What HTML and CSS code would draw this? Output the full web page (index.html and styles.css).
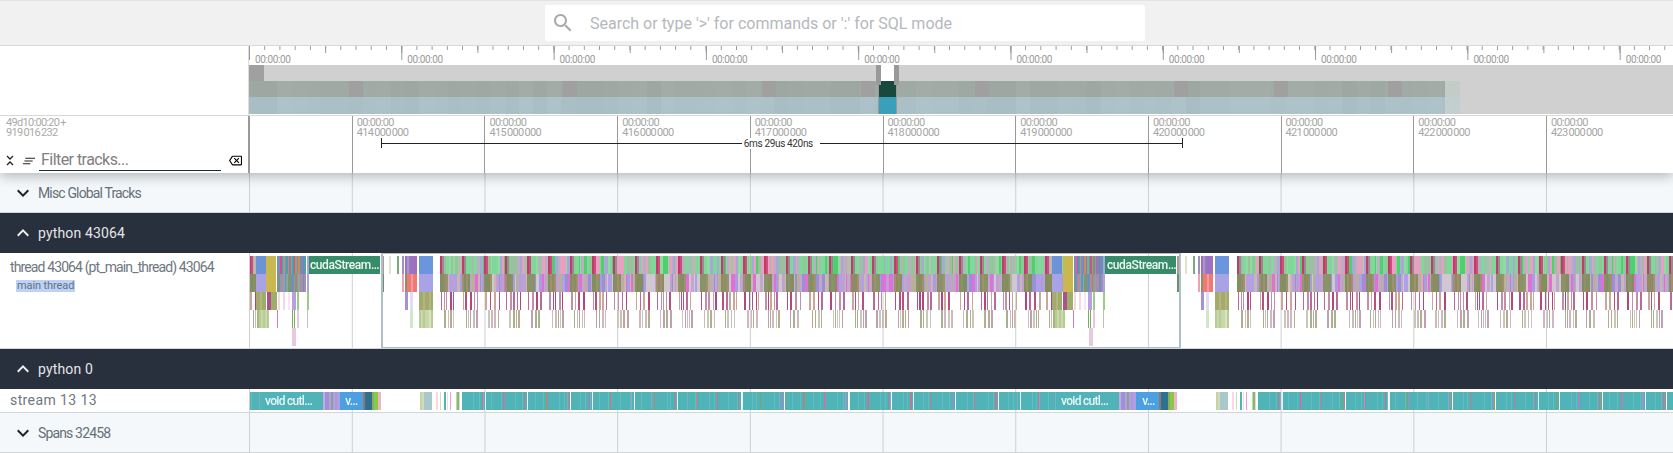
FILE: index.html
```html
<!DOCTYPE html>
<html>
<head>
    <title>Trace viewer</title>
    <link rel="stylesheet" href="styles.css">
</head>
<body>
    <!-- Search bar -->
    <div class="topbar">
        <div class="search">
            <svg class="search-icon" viewBox="0 0 24 24"><path d="M15.5 14h-.79l-.28-.27C15.41 12.59 16 11.11 16 9.5 16 5.91 13.09 3 9.5 3S3 5.91 3 9.5 5.91 16 9.5 16c1.61 0 3.09-.59 4.23-1.57l.27.28v.79l5 4.99L20.49 19l-4.99-5zm-6 0C7.01 14 5 11.99 5 9.5S7.01 5 9.5 5 14 7.01 14 9.5 11.99 14 9.5 14z"/></svg>
            <span class="search-text">Search or type '&gt;' for commands or ':' for SQL mode</span>
        </div>
    </div>

    <!-- Overview minimap -->
    <div class="overview">
        <div class="overview-side"></div>
        <div class="overview-main">
            <div class="ruler">
                <span class="ruler-label">00:00:00</span>
                <span class="ruler-label">00:00:00</span>
                <span class="ruler-label">00:00:00</span>
                <span class="ruler-label">00:00:00</span>
                <span class="ruler-label">00:00:00</span>
                <span class="ruler-label">00:00:00</span>
                <span class="ruler-label">00:00:00</span>
                <span class="ruler-label">00:00:00</span>
                <span class="ruler-label">00:00:00</span>
                <span class="ruler-label">00:00:00</span>
            </div>
            <canvas id="overviewCanvas" width="1424" height="49"></canvas>
        </div>
    </div>

    <!-- Time axis and filter box -->
    <div class="time-header">
        <div class="header-side">
            <div class="time-offset">49d10:00:20 +<br>919 016 232</div>
            <div class="filter-row">
                <svg class="collapse-icon" viewBox="0 0 8 11"><path d="M1 1l3 3 3-3M1 10l3-3 3 3" fill="none" stroke="#222" stroke-width="1.3"/></svg>
                <svg class="lines-icon" viewBox="0 0 13 8"><path d="M2.500 1H13M1.500 4H10.500M0 7H8" fill="none" stroke="#222" stroke-width="1.2"/></svg>
                <div class="filter-input">Filter tracks...</div>
                <svg class="clear-icon" viewBox="0 0 24 24"><path d="M22 3H7c-.69 0-1.23.35-1.59.88L0 12l5.41 8.11c.36.53.9.89 1.59.89h15c1.1 0 2-.9 2-2V5c0-1.1-.9-2-2-2zm0 16H7.07L2.4 12l4.66-7H22v14zm-11.59-2L14 13.41 17.59 17 19 15.59 15.41 12 19 8.41 17.59 7 14 10.59 10.41 7 9 8.41 12.59 12 9 15.59z"/></svg>
            </div>
        </div>
        <div class="header-main">
            <div class="time-col">00:00:00<br>414 000 000</div>
            <div class="time-col">00:00:00<br>415 000 000</div>
            <div class="time-col">00:00:00<br>416 000 000</div>
            <div class="time-col">00:00:00<br>417 000 000</div>
            <div class="time-col">00:00:00<br>418 000 000</div>
            <div class="time-col">00:00:00<br>419 000 000</div>
            <div class="time-col">00:00:00<br>420 000 000</div>
            <div class="time-col">00:00:00<br>421 000 000</div>
            <div class="time-col">00:00:00<br>422 000 000</div>
            <div class="time-col">00:00:00<br>423 000 000</div>
            <div class="measure">
                <div class="measure-line"></div>
                <span class="measure-label">6ms 29us 420ns</span>
            </div>
        </div>
    </div>

    <!-- Tracks -->
    <div class="track-row group-row">
        <div class="track-label">
            <svg class="chevron" viewBox="0 0 24 24"><path d="M16.59 8.59L12 13.17 7.41 8.59 6 10l6 6 6-6z"/></svg>
            <span>Misc Global Tracks</span>
        </div>
        <div class="track-body"></div>
    </div>

    <div class="process-row">
        <svg class="chevron" viewBox="0 0 24 24"><path d="M12 8l-6 6 1.41 1.41L12 10.83l4.59 4.58L18 14z"/></svg>
        <span>python 43064</span>
    </div>

    <div class="track-row thread-row">
        <div class="thread-label">
            <div>thread 43064 (pt_main_thread) 43064</div>
            <span class="chip">main thread</span>
        </div>
        <div class="track-body">
            <canvas id="threadCanvas" width="1423" height="95"></canvas>
            <div class="selection"></div>
            <span class="slice-text cuda-first">cudaStream…</span>
            <span class="slice-text cuda-second">cudaStream…</span>
        </div>
    </div>

    <div class="process-row">
        <svg class="chevron" viewBox="0 0 24 24"><path d="M12 8l-6 6 1.41 1.41L12 10.83l4.59 4.58L18 14z"/></svg>
        <span>python 0</span>
    </div>

    <div class="track-row stream-row">
        <div class="stream-label">stream 13 13</div>
        <div class="track-body">
            <canvas id="streamCanvas" width="1423" height="23"></canvas>
            <span class="slice-text stream-text void-first">void cutl…</span>
            <span class="slice-text stream-text v-first">v…</span>
            <span class="slice-text stream-text void-second">void cutl…</span>
            <span class="slice-text stream-text v-second">v…</span>
        </div>
    </div>

    <div class="track-row group-row">
        <div class="track-label">
            <svg class="chevron" viewBox="0 0 24 24"><path d="M16.59 8.59L12 13.17 7.41 8.59 6 10l6 6 6-6z"/></svg>
            <span>Spans 32458</span>
        </div>
        <div class="track-body"></div>
    </div>

    <script src="script.js"></script>
</body>
</html>
```

FILE: styles.css
```css
/* Reset some default styles */
body {
    font-family: Roboto, "Liberation Sans", sans-serif;
    margin: 0;
    padding: 0;
    height: 453px;
    overflow: hidden;
    background-color: #fff;
}

canvas {
    display: block;
}

/* Search bar */
.topbar {
    height: 46px;
    box-sizing: border-box;
    padding: 4px 0 0 545px;
    background-color: #f1f1f1;
    border-top: 1px solid #e4e4e4;
    border-bottom: 1px solid #d9d9d9;
    position: relative;
    z-index: 4;
}

.search {
    width: 600px;
    height: 36px;
    display: flex;
    align-items: center;
    background-color: #fff;
    border-radius: 2px;
}

.search-icon {
    width: 24px;
    height: 24px;
    margin-left: 6px;
    fill: #a9a9a9;
}

.search-text {
    margin-left: 15px;
    font-size: 16px;
    color: #b5b8bc;
}

/* Overview minimap */
.overview {
    display: flex;
    height: 69px;
    background-color: #fff;
    border-bottom: 1px solid #d8d8d8;
    position: relative;
    z-index: 3;
}

.overview-side {
    width: 249px;
    flex: none;
    box-sizing: border-box;
    border-right: 1px solid #dcdcdc;
}

.overview-main {
    flex: 1;
    min-width: 0;
}

.ruler {
    display: flex;
    height: 19px;
    box-sizing: border-box;
    background-image:
        linear-gradient(to right, #999 1px, transparent 1px),
        linear-gradient(to right, #999 1px, transparent 1px),
        linear-gradient(to right, #999 1px, transparent 1px);
    background-size: 152.3px 14px, 76.15px 7px, 15.23px 4px;
    background-repeat: repeat-x;
}

.ruler-label {
    flex: 0 0 152.3px;
    box-sizing: border-box;
    padding: 8px 0 0 6px;
    font-size: 10px;
    line-height: 11px;
    letter-spacing: -0.4px;
    color: #999;
}

.ruler-label:last-child {
    flex: 1 1 0;
}

/* Time axis */
.time-header {
    display: flex;
    height: 57px;
    background-color: #fff;
    box-shadow: 0 3px 12px rgba(0, 0, 0, 0.28);
    position: relative;
    z-index: 2;
}

.header-side {
    flex: none;
    box-sizing: border-box;
    border-right: 2px solid #9a9a9a;
    width: 250px;
    padding: 2px 0 0 6px;
}

.time-offset {
    font-size: 11px;
    line-height: 10px;
    letter-spacing: -0.7px;
    word-spacing: -1px;
    color: #aaa;
    height: 32px;
}

.filter-row {
    display: flex;
    align-items: center;
}

.collapse-icon {
    width: 8px;
    height: 11px;
    flex: none;
}

.lines-icon {
    width: 12px;
    height: 8px;
    margin-left: 9px;
    flex: none;
}

.filter-input {
    width: 182px;
    height: 21px;
    margin-left: 4px;
    padding-left: 2px;
    box-sizing: border-box;
    border-bottom: 1px solid #1e2833;
    font-size: 16px;
    line-height: 19px;
    letter-spacing: -0.55px;
    color: #808080;
}

.clear-icon {
    width: 13px;
    height: 13px;
    margin-left: 8px;
    flex: none;
}

.header-main {
    flex: 1;
    min-width: 0;
    display: flex;
    padding-left: 101.8px;
    position: relative;
}

.time-col {
    flex: 0 0 132.7px;
    box-sizing: border-box;
    border-left: 1px solid #999;
    padding: 2px 0 0 4px;
    font-size: 11px;
    line-height: 10px;
    letter-spacing: -0.7px;
    word-spacing: -1px;
    color: #a6a6a6;
}

.time-col:nth-last-child(2) {
    flex: 1 1 0;
}

/* Measured span between the two markers */
.measure {
    position: absolute;
    left: 130.8px;
    top: 22px;
    width: 800px;
    height: 10px;
    border-left: 1px solid #222;
    border-right: 1px solid #222;
}

.measure-line {
    margin-top: 5px;
    border-top: 1px solid #222;
}

.measure-label {
    position: absolute;
    left: 360px;
    top: 0;
    width: 78px;
    padding-left: 2px;
    box-sizing: border-box;
    background-color: #fff;
    font-size: 10px;
    line-height: 11px;
    letter-spacing: -0.35px;
    color: #333;
}

/* Tracks */
.track-row {
    display: flex;
    box-sizing: border-box;
    border-bottom: 1px solid #d3d6d8;
}

.group-row {
    height: 40px;
    background-color: #f4f8fb;
}

.track-label {
    width: 249px;
    flex: none;
    display: flex;
    align-items: center;
    padding-left: 11px;
    box-sizing: border-box;
    font-size: 14px;
    letter-spacing: -0.85px;
    color: #676f78;
}

.track-label span {
    margin-left: 3px;
}

.track-body {
    flex: 1;
    min-width: 0;
    position: relative;
    border-left: 1px solid #ccd0d3;
    background-image: linear-gradient(to right, #ccd0d3 1px, transparent 1px);
    background-size: 132.7px 100%;
    background-position: 101.8px 0;
}

.chevron {
    width: 24px;
    height: 24px;
    flex: none;
    fill: #222;
}

.process-row {
    height: 40px;
    display: flex;
    align-items: center;
    padding-left: 11px;
    background-color: #282f3d;
    font-size: 14px;
    letter-spacing: 0.15px;
    color: #e4e6e8;
}

.process-row .chevron {
    fill: #eee;
    margin-right: 3px;
}

.thread-row {
    height: 96px;
}

.thread-label {
    width: 249px;
    flex: none;
    box-sizing: border-box;
    padding: 6px 0 0 10px;
    font-size: 14px;
    line-height: 17px;
    letter-spacing: -0.88px;
    color: #6f7780;
}

.chip {
    display: inline-block;
    margin: 1px 0 0 6px;
    padding: 0 1px;
    font-size: 11px;
    line-height: 12px;
    letter-spacing: -0.1px;
    background-color: #bcd3f7;
    color: #66707c;
}

.selection {
    position: absolute;
    left: 131px;
    top: 0;
    width: 800px;
    height: 95px;
    box-sizing: border-box;
    border: 1px solid #aebfc6;
    border-left-width: 2px;
    border-right-width: 2px;
}

.stream-row {
    height: 24px;
}

.stream-label {
    width: 249px;
    flex: none;
    box-sizing: border-box;
    padding: 3px 0 0 10px;
    font-size: 14px;
    line-height: 17px;
    letter-spacing: 0.4px;
    color: #6f7780;
}

/* Text on the slices */
.slice-text {
    position: absolute;
    top: 3px;
    height: 18px;
    line-height: 18px;
    font-size: 12px;
    font-weight: 500;
    letter-spacing: -0.4px;
    text-align: center;
    color: #eef7f4;
}

.cuda-first {
    left: 59px;
    width: 71px;
}

.cuda-second {
    left: 856px;
    width: 71px;
}

.stream-text {
    letter-spacing: -0.7px;
    color: #e8f6f6;
}

.void-first {
    left: 4px;
    width: 69px;
}

.v-first {
    left: 90px;
    width: 23px;
}

.void-second {
    left: 800px;
    width: 69px;
}

.v-second {
    left: 887px;
    width: 23px;
}
```

FILE: script.js
```js
// Small seeded random so the picture is the same on every load
function makeRandom(seed) {
    return function () {
        seed = (seed + 0x6d2b79f5) | 0;
        let t = Math.imul(seed ^ (seed >>> 15), 1 | seed);
        t = (t + Math.imul(t ^ (t >>> 7), 61 | t)) ^ t;
        return ((t ^ (t >>> 14)) >>> 0) / 4294967296;
    };
}

function pick(rand, list) {
    return list[Math.floor(rand() * list.length)];
}

const CYCLE = 796.5;
const FIRST_CUDA = 58.6; // relative to the track body

// ---- overview ----
function drawOverview() {
    const ctx = document.getElementById("overviewCanvas").getContext("2d");
    const rand = makeRandom(7);
    const darkCells = [349, 563, 762, 861, 975, 1174, 1274, 1388];
    ctx.fillStyle = "#d0d0d0";
    ctx.fillRect(0, 0, 1424, 49);
    ctx.fillStyle = "#a0a0a0";
    ctx.fillRect(0, 0, 15, 16);

    for (let x = 0; x < 1196; x += 14.2) {
        const j = Math.floor(rand() * 6) - 3;
        ctx.fillStyle = `rgb(${161 + j}, ${171 + j}, ${166 + j})`;
        ctx.fillRect(Math.round(x), 16, 15, 16);
        ctx.fillStyle = `rgb(${172 + j}, ${192 + j}, ${199 + j})`;
        ctx.fillRect(Math.round(x), 32, 15, 17);
    }
    darkCells.forEach((left) => {
        ctx.fillStyle = "#a0a0a0";
        ctx.fillRect(left - 249, 16, 14, 16);
    });
    ctx.fillStyle = "#c4ccc8";
    ctx.fillRect(1196, 16, 15, 16);
    ctx.fillStyle = "#c2cfcf";
    ctx.fillRect(1196, 32, 15, 17);

    // selected window
    ctx.fillStyle = "#fff";
    ctx.fillRect(632, 0, 13, 16);
    ctx.fillStyle = "#174a3c";
    ctx.fillRect(630, 16, 17, 16);
    ctx.fillStyle = "#3a9fbb";
    ctx.fillRect(630, 32, 17, 17);
    ctx.fillStyle = "#999";
    ctx.fillRect(627, 0, 5, 20);
    ctx.fillRect(645, 0, 5, 20);
    ctx.fillRect(629, 20, 1, 29);
    ctx.fillRect(647, 20, 1, 29);
}

// ---- thread flame chart ----
function drawThread() {
    const ctx = document.getElementById("threadCanvas").getContext("2d");

    function bar(x, row, w, color) {
        ctx.fillStyle = color;
        ctx.fillRect(Math.round(x), 3 + row * 18, Math.max(1, Math.round(w)), 18);
    }

    function stripes(x, row, w, colors, rand) {
        for (let i = 0; i < w; i += 2) {
            bar(x + i, row, 2, pick(rand, colors));
        }
    }

    const row0 = ["#7fd89a", "#86d6a0", "#8fdca0", "#4fd070", "#a8a8d8", "#b8b0c0", "#e8a0c0", "#90c898", "#9ac0a0", "#7fd89a"];
    const olive = ["#8a9268", "#7f8f5e", "#a09070", "#8f8a60"];
    const row1 = ["#a99de0", "#bfa0d0", "#c9b8b0", "#e070d8", "#b0a0e8", "#d0c8d0", "#9a90d8", "#c0a8c8", "#b8b098"];
    const row2 = ["#b5507f", "#b2477a", "#b96a98", "#c090a8", "#c8a898"];
    const row3 = ["#b8ac90", "#c8c8b8", "#c0a0b0", "#a8b090", "#d0b8c0"];
    const mix = ["#a070c0", "#7fb080", "#d05090", "#50a0a8", "#8088d0", "#c09060", "#b070d0"];
    const mix1 = ["#7f9a6a", "#b58a9a", "#88a8a8", "#a08fb0", "#6f8fc0"];
    const oliveStripes = ["#a0ad6a", "#94a460", "#b0b880", "#a8a870"];
    const paleStripes = ["#c8d8a8", "#d8e4c0", "#b8cc98", "#e4ecd4"];

    // everything is drawn relative to the start of the green slice
    function drawCycle(S) {
        const rand = makeRandom(42);

        // dense part, the call pattern repeats about every 21.6px
        for (let b = S + 131.8; b < S + 740; b += 21.6) {
            let x = b;
            bar(x, 0, 2, "#c43a6a");
            bar(x + 2, 0, 2, pick(rand, ["#c94f7c", "#8f8f8f"]));
            x += 4;
            while (x < b + 21.6) {
                const w = 1 + Math.floor(rand() * 3);
                bar(x, 0, w, pick(rand, row0));
                x += w;
            }
            x = b;
            while (x < b + 7) {
                bar(x, 1, 2, pick(rand, olive));
                x += 2;
            }
            while (x < b + 21.6) {
                const w = 1 + Math.floor(rand() * 3);
                bar(x, 1, w, pick(rand, row1));
                x += w;
            }
            x = b + 1;
            while (x < b + 15.5) {
                const w = 1 + Math.floor(rand() * 2);
                bar(x, 2, w, pick(rand, row2));
                x += w + 1 + Math.floor(rand() * 3);
            }
            x = b + 4;
            while (x < b + 14.5) {
                const w = 1 + Math.floor(rand() * 2);
                bar(x, 3, w, pick(rand, row3));
                x += w + 1 + Math.floor(rand() * 2);
            }
        }

        // just after the green slice
        bar(S, 0, 71, "#368c69");
        bar(S + 72, 0, 3, "#b09a90");
        bar(S + 72, 1, 3, "#6f8f68");
        bar(S + 80, 0, 2, "#dfe3cc");
        bar(S + 88, 0, 2, "#7da878");
        bar(S + 93, 0, 2, "#a08fc0");
        bar(S + 93, 1, 2, "#f0a0b8");
        for (let x = S + 96; x < S + 107; x += 2) {
            bar(x, 0, 2, pick(rand, ["#a070c0", "#b090d8", "#9080b8"]));
            bar(x, 1, 2, pick(rand, ["#f07a70", "#8a9268", "#f09ab0"]));
        }
        bar(S + 96, 2, 3, "#a890d8");
        bar(S + 101, 2, 3, "#e0dcf4");
        bar(S + 101, 3, 3, "#d0e8c8");
        bar(S + 110, 0, 14, "#6b96de");
        bar(S + 110, 1, 14, "#a9a3e6");
        stripes(S + 110, 2, 14, oliveStripes, rand);
        stripes(S + 110, 3, 13, paleStripes, rand);

        // the block just before the next green slice
        const E = S + CYCLE;
        bar(E - 53, 0, 10, "#6b93d6");
        bar(E - 53, 1, 10, "#a9a3e6");
        stripes(E - 53, 2, 9, oliveStripes, rand);
        bar(E - 52, 3, 2, "#a3b87a");
        stripes(E - 50, 3, 9, paleStripes, rand);
        bar(E - 42.4, 0, 10, "#c9b84f");
        bar(E - 42.4, 1, 10, "#c9b84f");
        for (let x = E - 42; x < E - 32; x += 2) {
            bar(x, 2, 2, pick(rand, ["#8a9e58", "#b0508a", "#7a78b8", "#a0ad6a"]));
        }
        for (let x = E - 31.5; x < E - 3; x += 1.5) {
            bar(x, 0, 2, pick(rand, mix));
            bar(x, 1, 2, pick(rand, mix1));
        }
        bar(E - 2, 0, 2, "#a9a3e6");
        bar(E - 2, 1, 2, "#a9a3e6");
        bar(E - 31, 2, 2, "#f0d8e4");
        bar(E - 26, 2, 2, "#f0d8e4");
        bar(E - 21, 2, 2, "#f8e4f4");
        bar(E - 17, 2, 4, "#b8a0e0");
        bar(E - 12, 2, 2, "#96d080");
        bar(E - 2, 2, 2, "#96d080");
        bar(E - 32, 3, 1, "#d080c0");
        bar(E - 17, 3, 1, "#80a860");
        bar(E - 15, 3, 1, "#80a860");
        bar(E - 12, 3, 2, "#e8c8e0");
        bar(E - 2, 3, 1, "#c0c0c0");
        bar(E - 16.5, 4, 4, "#e8c8e0");
    }

    drawCycle(FIRST_CUDA - CYCLE);
    drawCycle(FIRST_CUDA);
    drawCycle(FIRST_CUDA + CYCLE);
}

// ---- stream track ----
function drawStream() {
    const ctx = document.getElementById("streamCanvas").getContext("2d");

    function bar(x, w, color) {
        ctx.fillStyle = color;
        ctx.fillRect(Math.round(x), 3, Math.max(1, Math.round(w)), 18);
    }

    const teal = "#4fb3b8";
    const accents = ["#b0809a", "#8aa060", "#a08ac8", "#c07a88", "#8aa8c8"];

    function drawCycle(S) {
        const rand = makeRandom(11);

        // dense teal part
        for (let b = S + 155; b < S + CYCLE - 55; b += 21.4) {
            bar(b, 21, teal);
            bar(b + 6 + rand() * 6, 1, "#62bcc0");
            bar(b + 14 + rand() * 3, 1, "#62bcc0");
            bar(b + 18, 1, pick(rand, accents));
            if (rand() > 0.45) {
                bar(b + 19.5, 1, pick(rand, accents));
            }
            if (rand() > 0.65) {
                bar(b, 1, "#eaf4f6");
            }
        }

        // the labelled slices
        bar(S - 55, 69, teal);
        bar(S - 50, 1, "#7fb0c0");
        const mixed = ["#a090d8", "#8fa090", "#b0a0e0", "#c8a8e0", "#a99ae0", "#6fa8a0"];
        for (let x = S + 14; x < S + 31; x += 2) {
            bar(x, 2, pick(rand, mixed));
        }
        bar(S + 31, 23, "#4c9fe0");
        bar(S + 54, 2, "#8a7a70");
        bar(S + 56, 7, "#2f6f8f");
        bar(S + 63, 2, "#8ab050");
        bar(S + 65, 4, "#88c850");
        bar(S + 69, 3, "#eab8c0");

        // sparse part
        bar(S + 111, 2, "#c8d4a0");
        bar(S + 113, 2, "#d0dcc0");
        bar(S + 115, 8, "#a8c8cc");
        bar(S + 127, 2, "#fbd8e8");
        bar(S + 131, 1, "#c8e8b0");
        bar(S + 135, 2, teal);
        bar(S + 138, 1, "#fbd8e8");
        bar(S + 141, 1, "#e8a0d8");
        bar(S + 147, 1, "#c0d8a0");
        bar(S + 148, 2, "#88b880");
        bar(S + 150, 1, "#d8e0c8");
        bar(S + 153, 2, teal);
    }

    drawCycle(FIRST_CUDA - CYCLE);
    drawCycle(FIRST_CUDA);
    drawCycle(FIRST_CUDA + CYCLE);
}

drawOverview();
drawThread();
drawStream();
```
